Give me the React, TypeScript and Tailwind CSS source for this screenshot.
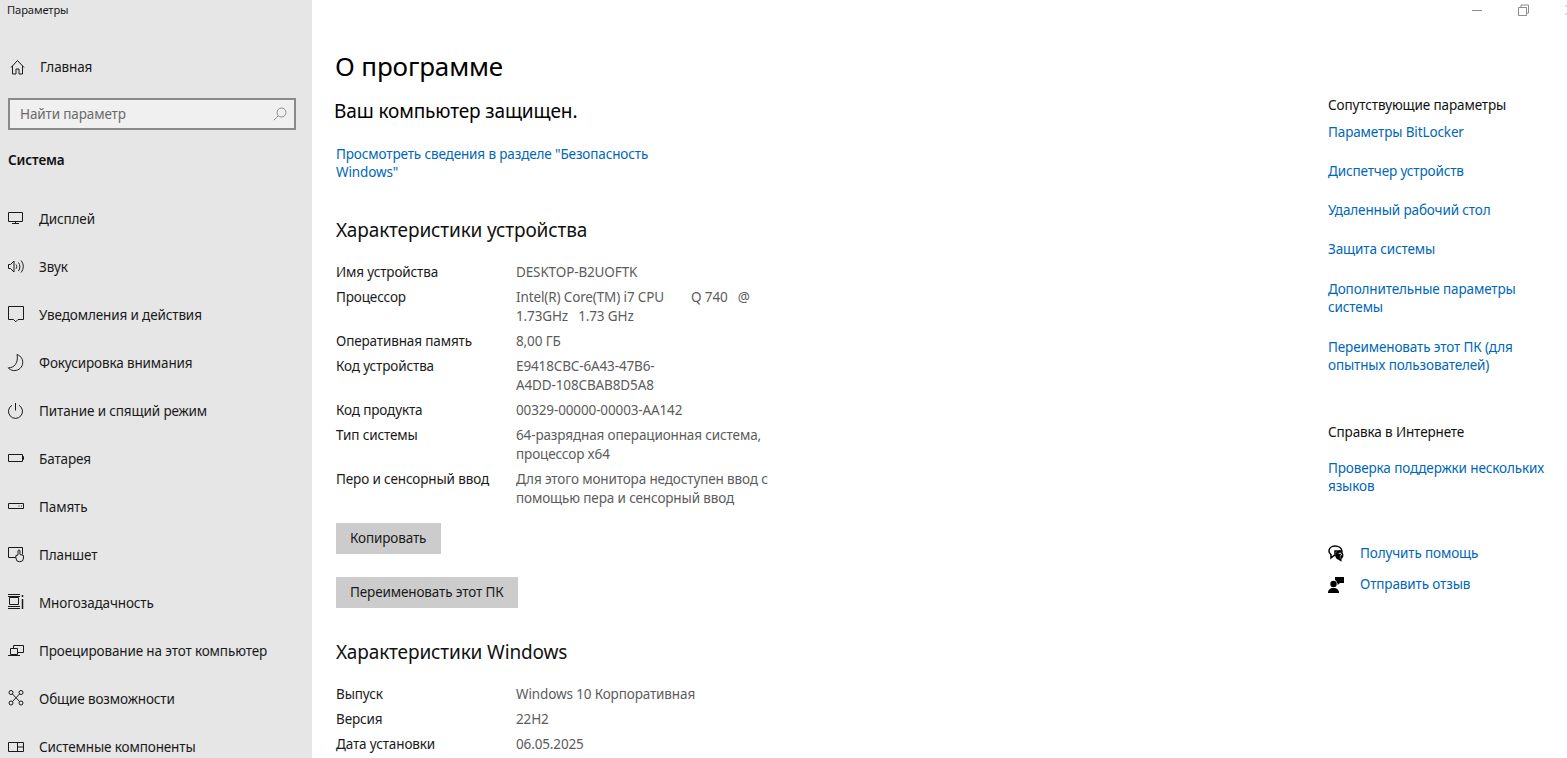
import type { ReactNode } from 'react';

const stroke = { fill: 'none', stroke: '#1a1a1a', strokeWidth: 1 };

function Icon({ children }: { children: ReactNode }) {
  return (
    <svg width="18" height="18" viewBox="0 0 18 18" className="shrink-0" {...stroke}>
      {children}
    </svg>
  );
}

const navItems: { label: string; icon: ReactNode }[] = [
  {
    label: 'Дисплей',
    icon: <path d="M1.5 2.5h14v9h-14zM8.5 11.5v2.5M5 13.5h7" />,
  },
  {
    label: 'Звук',
    icon: (
      <>
        <path d="M1.5 6.500h2L7 3v11L3.500 10.500h-2z" />
        <path d="M9 6.500c1 1.300 1 3 0 4.300M11.500 4.500c1.800 2.500 1.800 6 0 8.500M14 2.500c3 3.600 3 8.400 0 12" />
      </>
    ),
  },
  {
    label: 'Уведомления и действия',
    icon: <path d="M1.5 .5h15v13h-5.500L8.800 15.800 6.500 13.500h-5z" />,
  },
  {
    label: 'Фокусировка внимания',
    icon: <path d="M10 .5c4.300 1.500 6.500 5.500 5.500 9.800-1 4.200-5 6.700-9.200 6.200-2.200-.3-3.800-1.200-5-2.700 5.500.5 10.500-5 8.700-13.300z" />,
  },
  {
    label: 'Питание и спящий режим',
    icon: <path d="M8.500 1v7.500M5 3.300a7 7 0 1 0 7 0" />,
  },
  {
    label: 'Батарея',
    icon: <path d="M1.500 4.500h14v7h-14zM15.500 6.500h1v3h-1" />,
  },
  {
    label: 'Память',
    icon: <path d="M1.500 5.500h15v5h-15zM11.500 8h1M14 8h1" />,
  },
  {
    label: 'Планшет',
    icon: (
      <>
        <path d="M9 11.500H1.500v-10h14v7" />
        <path d="M11 9V5a1 1 0 0 1 2 0v3.500l3.500 1v2.500a3.800 3.800 0 0 1-7.600 0V9.500z" fill="#e6e6e6" />
      </>
    ),
  },
  {
    label: 'Многозадачность',
    icon: (
      <>
        <path d="M2.500 3.500h9v7h-9zM1 .5h12M1 2.500h12M1 12.500h12M1 14.500h12" />
        <path d="M15.500 1v2M15.500 5v10" strokeWidth="1.500" />
      </>
    ),
  },
  {
    label: 'Проецирование на этот компьютер',
    icon: <path d="M6.500 6V3.500h10v7h-6M3.500 6.500h7v6h-7zM1 13.500h12" />,
  },
  {
    label: 'Общие возможности',
    icon: (
      <>
        <circle cx="4" cy="2.500" r="2" />
        <circle cx="14" cy="2.500" r="2" />
        <circle cx="4" cy="13" r="2" />
        <circle cx="14" cy="13" r="2" />
        <path d="M5.500 4l7 7.500M12.500 4l-7 7.500" />
      </>
    ),
  },
  {
    label: 'Системные компоненты',
    icon: <path d="M1.500 4.500h15v9h-15zM10.500 4.500v9M10.500 9h6" />,
  },
];

const deviceSpecs = [
  ['Имя устройства', 'DESKTOP-B2UOFTK'],
  ['Процессор', 'Intel(R) Core(TM) i7 CPU        Q 740   @ 1.73GHz   1.73 GHz'],
  ['Оперативная память', '8,00 ГБ'],
  ['Код устройства', 'E9418CBC-6A43-47B6-\nA4DD-108CBAB8D5A8'],
  ['Код продукта', '00329-00000-00003-AA142'],
  ['Тип системы', '64-разрядная операционная система, процессор x64'],
  ['Перо и сенсорный ввод', 'Для этого монитора недоступен ввод с помощью пера и сенсорный ввод'],
];

const windowsSpecs = [
  ['Выпуск', 'Windows 10 Корпоративная'],
  ['Версия', '22H2'],
  ['Дата установки', '06.05.2025'],
];

function SpecRows({ rows }: { rows: string[][] }) {
  return (
    <div className="flex flex-col gap-[6px]">
      {rows.map(([label, value]) => (
        <div key={label} className="flex leading-[19px]">
          <div className="w-[180px] shrink-0 text-[#1a1a1a]">{label}</div>
          <div className="w-[262px] whitespace-pre-wrap text-[#5c5c5c]">{value}</div>
        </div>
      ))}
    </div>
  );
}

function Sidebar() {
  return (
    <aside className="w-[312px] shrink-0 bg-[#e6e6e6]">
      <div className="h-[20px] pl-[7px] text-[11.2px] leading-[20px] text-[#1a1a1a]">Параметры</div>
      <div className="mt-[27px] flex h-[40px] items-center gap-[14px] pl-[9px]">
        <svg width="17" height="17" viewBox="0 0 17 17" {...stroke}>
          <path d="M2 8.500L8.500 1.500 15 8.500M3.500 7v8h3.500v-5h3v5h3.500V7" />
        </svg>
        <span>Главная</span>
      </div>
      <div className="ml-[8px] mt-[11px] flex h-[32px] w-[288px] items-center justify-between border-2 border-[#8a8a8a] bg-[#f0f0f0] pl-[10px] pr-[7px] text-[#6b6b6b]">
        <span>Найти параметр</span>
        <svg width="14" height="14" viewBox="0 0 14 14" fill="none" stroke="#8a8a8a">
          <circle cx="8.500" cy="5.500" r="4.500" />
          <path d="M5.200 8.800L.8 13.200" />
        </svg>
      </div>
      <div className="mt-[21px] pl-[8px] font-semibold leading-[19px] text-[#111111]">Система</div>
      <nav className="mt-[25px] flex flex-col">
        {navItems.map((item) => (
          <div key={item.label} className="flex h-[48px] items-center gap-[14px] pl-[7px]">
            <Icon>{item.icon}</Icon>
            <span className="whitespace-nowrap">{item.label}</span>
          </div>
        ))}
      </nav>
    </aside>
  );
}

function Main() {
  return (
    <main className="w-[700px] pl-[24px] pt-[48px]">
      <h1 className="-ml-[1px] text-[26px] leading-[36px] text-black">О программе</h1>
      <p className="-ml-[2px] mt-[14px] text-[19.050px] leading-[26px] text-black">Ваш компьютер защищен.</p>
      <a className="mt-[21px] block w-[330px] leading-[18px] text-[#0067b8]">
        Просмотреть сведения в разделе "Безопасность Windows"
      </a>
      <h2 className="mt-[36px] text-[19px] leading-[26px] text-[#111111]">Характеристики устройства</h2>
      <div className="mt-[20px]">
        <SpecRows rows={deviceSpecs} />
      </div>
      <button className="mt-[15px] block h-[31px] bg-[#cccccc] pl-[14px] pr-[15px] text-[#1a1a1a]">Копировать</button>
      <button className="mt-[23px] block h-[31px] bg-[#cccccc] px-[14px] text-[#1a1a1a]">Переименовать этот ПК</button>
      <h2 className="mt-[31px] text-[19px] leading-[26px] text-[#111111]">Характеристики Windows</h2>
      <div className="mt-[20px]">
        <SpecRows rows={windowsSpecs} />
      </div>
    </main>
  );
}

function RightRail() {
  return (
    <div className="ml-auto w-[239px] shrink-0 pt-[96px] leading-[18px]">
      <div className="text-[#111111]">Сопутствующие параметры</div>
      <div className="mt-[9px] flex flex-col gap-[21px] text-[#0067b8]">
        <a className="block">Параметры BitLocker</a>
        <a className="block">Диспетчер устройств</a>
        <a className="block">Удаленный рабочий стол</a>
        <a className="block">Защита системы</a>
        <a className="mt-[1px] block w-[225px]">Дополнительные параметры системы</a>
        <a className="mt-[1px] block w-[225px]">Переименовать этот ПК (для опытных пользователей)</a>
      </div>
      <div className="mt-[49px] text-[#111111]">Справка в Интернете</div>
      <a className="mt-[18px] block text-[#0067b8]">Проверка поддержки нескольких языков</a>
      <div className="mt-[49px] flex flex-col gap-[13px] text-[#0067b8]">
        <div className="flex items-center gap-[15px]">
          <svg width="17" height="17" viewBox="0 0 17 17" className="shrink-0">
            <path d="M7 1C3.500 1 1 3.200 1 6c0 1.500.7 2.800 2 3.700V13l3-2.500c.3 0 .7.100 1 .100V6h7c-.5-3-3.500-5-7-5z" fill="none" stroke="#000" strokeWidth="1.500" />
            <path d="M12 5.500a4.800 4.800 0 0 0-1.500 9.300l3 2v-2.800A4.800 4.800 0 0 0 12 5.500z" fill="#000" />
            <path d="M10.500 9c.4-1.200 3-1.200 3 .4 0 1-1.300 1-1.300 2M12.200 12.500v.8" fill="none" stroke="#fff" />
          </svg>
          <span>Получить помощь</span>
        </div>
        <div className="flex items-center gap-[15px]">
          <svg width="17" height="17" viewBox="0 0 17 17" className="shrink-0" fill="#000">
            <circle cx="5.500" cy="8" r="3.200" />
            <path d="M0 17c0-3.500 2.200-5 5.500-5s5.500 1.500 5.500 5z" />
            <path d="M7 1h9v6h-4l-2.500 2V7H9c0-1.500-1-2.500-2-3z" />
          </svg>
          <span>Отправить отзыв</span>
        </div>
      </div>
    </div>
  );
}

export default function App() {
  return (
    <div className="relative flex h-[758px] w-[1567px] overflow-hidden bg-white font-['Noto_Sans',sans-serif] text-[13.500px] tracking-[-0.13px] text-[#1a1a1a]">
      <Sidebar />
      <Main />
      <RightRail />
      {/* window controls */}
      <div className="absolute right-0 top-0 flex h-[20px] items-center">
        <svg width="107" height="20" viewBox="0 0 107 20" fill="none" stroke="#8c8c8c">
          <path d="M12 10.500h10M58.500 7.500h8v8h-8zM61 7.500V5h7.500v8H66.500" />
          <path d="M105 5l2 2M105 15l2-2" stroke="#bdbdbd" />
        </svg>
      </div>
    </div>
  );
}
